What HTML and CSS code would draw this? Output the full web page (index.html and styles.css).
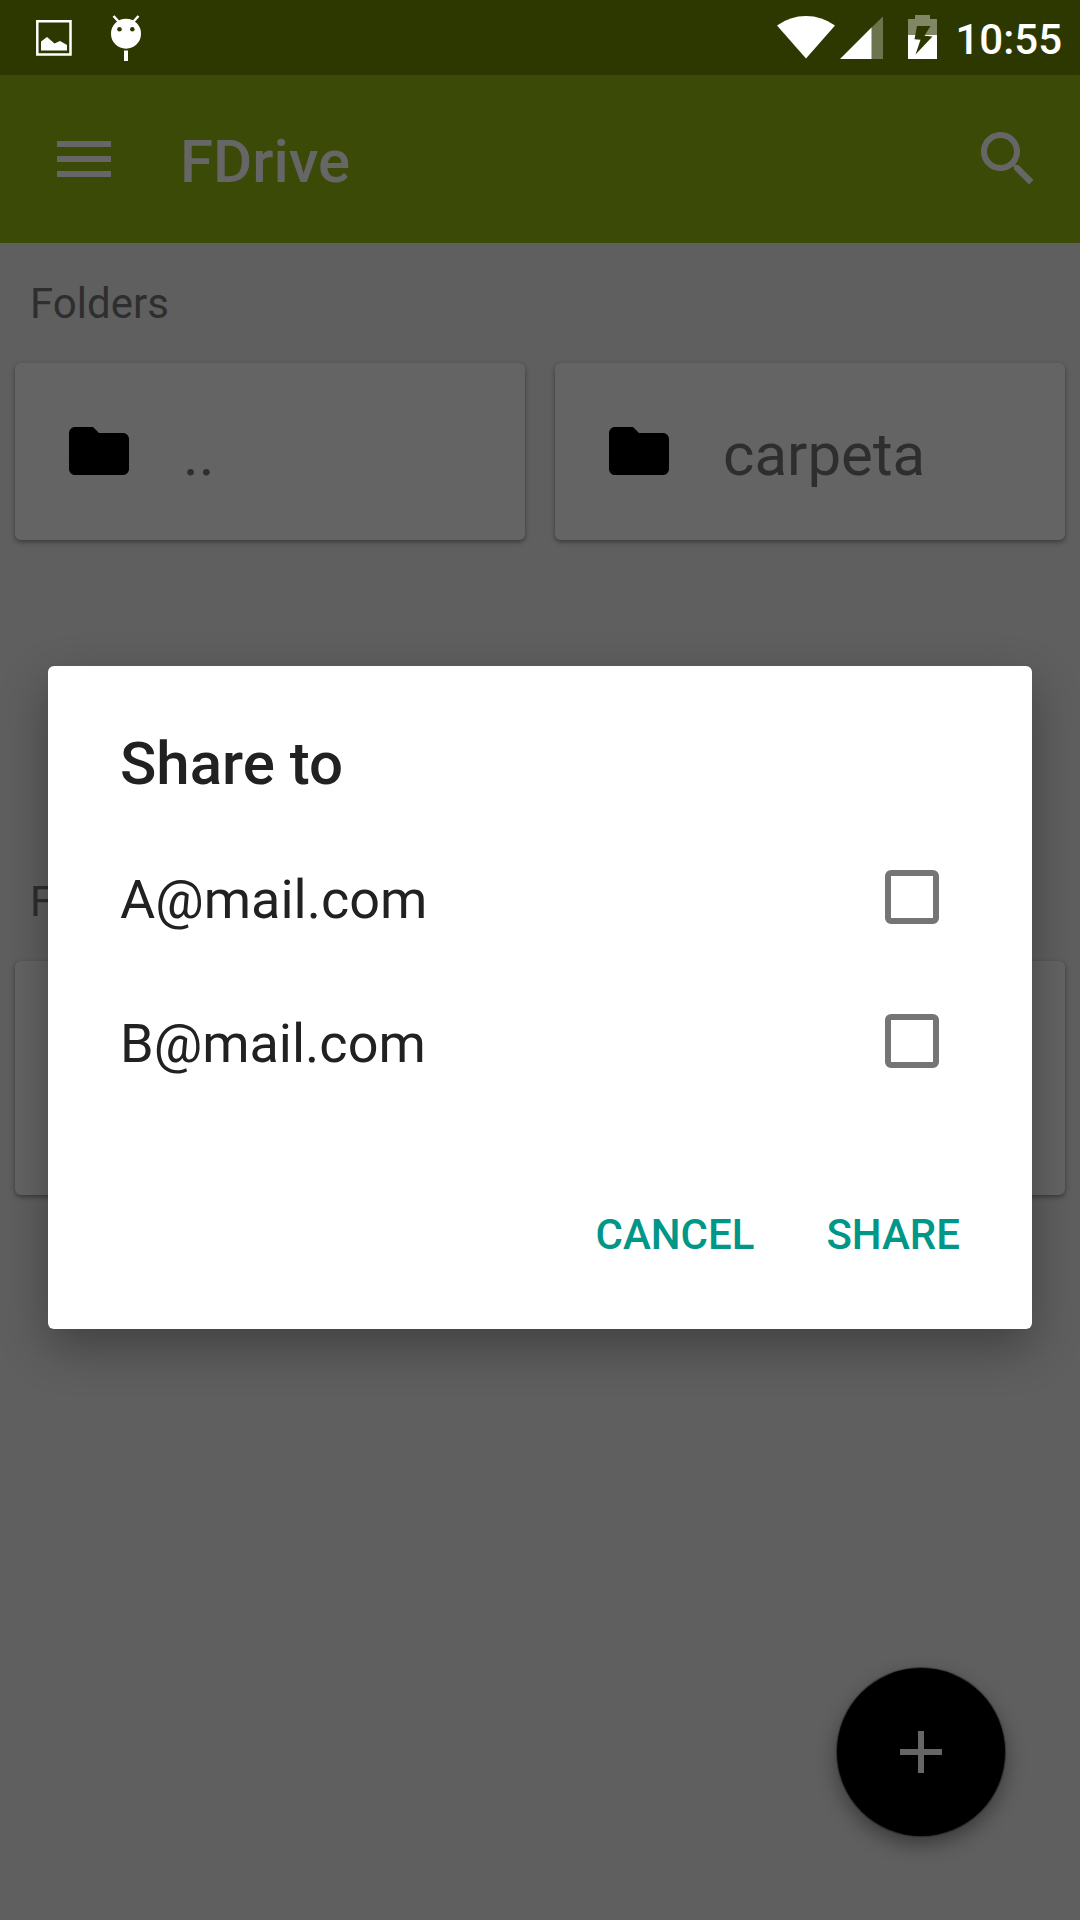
FILE: index.html
```html
<!DOCTYPE html>
<html lang="en">
<head>
<meta charset="utf-8">
<meta name="viewport" content="width=device-width">
<title>FDrive</title>
<link rel="stylesheet" href="styles.css">
</head>
<body>
<div class="status-bar">
  <svg class="status-picture" width="36" height="36" viewBox="0 0 36 36" aria-hidden="true">
    <path class="outline" d="M1.3 1.3H34.5V34.5H1.3Z"/>
    <path d="M5 21.500L11 17L18.500 23.500L24 21L31 25V30.500H5Z"/>
  </svg>
  <svg class="status-android" width="32" height="48" viewBox="0 0 32 48" aria-hidden="true">
    <path class="outline" d="M3.500 1L9 7M28.500 1L23 7"/>
    <circle cx="16" cy="18.700" r="15"/>
    <circle class="eye" cx="9.500" cy="14.300" r="2.300"/>
    <circle class="eye" cx="22.300" cy="14.300" r="2.300"/>
    <path d="M14 35.500H18V46H14Z"/>
  </svg>
  <div class="status-right">
    <svg width="58" height="44" viewBox="0 0 58 44" aria-hidden="true">
      <path d="M0 10.500Q13 1 29 1T58 10.500L29 43.500Z"/>
    </svg>
    <svg class="status-signal" width="44" height="44" viewBox="0 0 44 44" aria-hidden="true">
      <path class="faint" d="M31 13L43 1.500V44H31Z"/>
      <path d="M0 44L31.500 12.500V44Z"/>
    </svg>
    <svg class="status-battery" width="29" height="44" viewBox="0 0 29 44" aria-hidden="true">
      <path class="faint" d="M7 0H22V4H29V20H0V4H7Z"/>
      <path d="M0 20H29V44H0Z"/>
      <path class="bolt" d="M9 11H22.500L16.500 20.700L24.500 21.500L7.500 39.500L12.500 24.700L6.500 24.300Z"/>
    </svg>
    <time class="clock">10:55</time>
  </div>
</div>

<div class="app">
  <header class="toolbar">
    <button class="icon-button" type="button" aria-label="Menu">
      <svg width="72" height="72" viewBox="0 0 24 24"><path d="M3 18h18v-2H3v2zm0-5h18v-2H3v2zm0-7v2h18V6H3z"/></svg>
    </button>
    <h1 class="app-title">FDrive</h1>
    <button class="icon-button" type="button" aria-label="Search">
      <svg width="72" height="72" viewBox="0 0 24 24"><path d="M15.500 14h-.79l-.28-.27C15.410 12.590 16 11.110 16 9.500 16 5.910 13.090 3 9.500 3S3 5.910 3 9.500 5.910 16 9.500 16c1.610 0 3.090-.59 4.230-1.570l.27.28v.79l5 4.990L20.490 19l-4.990-5zm-6 0C7.010 14 5 11.990 5 9.500S7.010 5 9.500 5 14 7.010 14 9.500 11.990 14 9.500 14z"/></svg>
    </button>
  </header>

  <main class="content">
    <section class="folders">
      <h2 class="section-label">Folders</h2>
      <div class="folder-grid">
        <div class="card">
          <svg width="72" height="72" viewBox="0 0 24 24" aria-hidden="true"><path d="M10 4H4c-1.100 0-1.990.9-1.990 2L2 18c0 1.100.9 2 2 2h16c1.100 0 2-.9 2-2V8c0-1.100-.9-2-2-2h-8l-2-2z"/></svg>
          <span class="card-name">..</span>
        </div>
        <div class="card">
          <svg width="72" height="72" viewBox="0 0 24 24" aria-hidden="true"><path d="M10 4H4c-1.100 0-1.990.9-1.990 2L2 18c0 1.100.9 2 2 2h16c1.100 0 2-.9 2-2V8c0-1.100-.9-2-2-2h-8l-2-2z"/></svg>
          <span class="card-name">carpeta</span>
        </div>
      </div>
    </section>
    <section>
      <h2 class="section-label">Files</h2>
      <div class="file-list">
        <div class="card file-card"></div>
      </div>
    </section>
  </main>

  <button class="fab" type="button" aria-label="Add">
    <svg width="72" height="72" viewBox="0 0 24 24"><path d="M19 13h-6v6h-2v-6H5v-2h6V5h2v6h6v2z"/></svg>
  </button>

  <div class="overlay">
    <form class="dialog" role="dialog" aria-labelledby="dialog-title">
      <h2 class="dialog-title" id="dialog-title">Share to</h2>
      <label class="option"><span>A@mail.com</span><input class="checkbox" type="checkbox"></label>
      <label class="option"><span>B@mail.com</span><input class="checkbox" type="checkbox"></label>
      <div class="actions">
        <button class="action" type="button">CANCEL</button>
        <button class="action" type="button">SHARE</button>
      </div>
    </form>
  </div>
</div>
</body>
</html>
```
FILE: styles.css
```css
* {
  box-sizing: border-box;
}

body {
  margin: 0;
  min-height: 100vh;
  display: flex;
  flex-direction: column;
  background: #5f5f5f;
  color: #2e2e2e;
  font-family: Roboto, "Liberation Sans", sans-serif;
}

h1,
h2 {
  margin: 0;
}

button {
  border: 0;
  padding: 0;
  background: none;
  font-family: inherit;
}

svg {
  display: block;
  flex: none;
}

/* Status bar */

.status-bar {
  display: flex;
  align-items: flex-start;
  height: 75px;
  padding: 15px 18px 0 36px;
  background: #2d3800;
  color: #fff;
  fill: #fff;
}

.status-bar .outline {
  fill: none;
  stroke: #fff;
  stroke-width: 2.500;
}

.status-bar .faint {
  fill: #fff;
  opacity: 0.4;
}

.status-signal .faint {
  opacity: 0.3;
}

.status-bar .eye,
.status-bar .bolt {
  fill: #2d3800;
}

.status-picture {
  margin-top: 5px;
}

.status-android {
  margin-left: 38px;
}

.status-right {
  display: flex;
  margin-left: auto;
}

.status-signal {
  margin-left: 5px;
}

.status-battery {
  margin-left: 24px;
}

.clock {
  margin-left: 18px;
  font-size: 42px;
  font-weight: 500;
  line-height: 50px;
}

/* App */

.app {
  position: relative;
  flex: 1;
  display: flex;
  flex-direction: column;
}

.toolbar {
  display: flex;
  align-items: center;
  height: 168px;
  padding: 0 36px 0 48px;
  background: #3c4a08;
  color: #666;
}

.icon-button {
  fill: #666;
}

.app-title {
  flex: 1;
  padding: 5px 0 0 60px;
  font-size: 60px;
  font-weight: 500;
  line-height: 72px;
}

.folders {
  min-height: 598px;
}

.section-label {
  height: 120px;
  padding: 36px 30px 0;
  font-size: 42px;
  font-weight: 400;
  line-height: 50px;
}

.folder-grid {
  display: grid;
  grid-template-columns: 1fr 1fr;
  gap: 30px;
  padding: 0 15px;
}

.file-list {
  padding: 0 15px;
}

.card {
  display: flex;
  align-items: flex-start;
  height: 177px;
  padding: 52px 48px 0;
  border-radius: 6px;
  background: #646464;
  box-shadow: 0 2px 5px rgba(0, 0, 0, 0.4);
  fill: #000;
}

.file-card {
  height: 234px;
}

.card-name {
  padding: 4px 0 0 48px;
  font-size: 60px;
  line-height: 72px;
}

.fab {
  position: absolute;
  right: 75px;
  bottom: 84px;
  display: grid;
  place-items: center;
  width: 168px;
  height: 168px;
  border-radius: 50%;
  background: #000;
  fill: #666;
  box-shadow: 0 0 1px 1px rgba(0, 0, 0, 0.4), 0 8px 20px rgba(0, 0, 0, 0.4);
}

/* Share dialog */

.overlay {
  position: absolute;
  inset: 0;
  display: flex;
  align-items: center;
  padding: 0 48px;
}

.dialog {
  flex: 1;
  padding: 60px 0 54px;
  border-radius: 6px;
  background: #fff;
  color: #212121;
  box-shadow: 0 18px 48px rgba(0, 0, 0, 0.32);
}

.dialog-title {
  padding: 2px 72px 25px;
  font-size: 60px;
  font-weight: 500;
  line-height: 72px;
}

.option {
  display: flex;
  align-items: center;
  justify-content: space-between;
  height: 144px;
  padding: 0 93px 0 72px;
  font-size: 54px;
  line-height: 64px;
}

.option span {
  padding-top: 6px;
}

.checkbox {
  appearance: none;
  width: 54px;
  height: 54px;
  margin: 0;
  border: 6px solid #757575;
  border-radius: 6px;
}

.checkbox:checked {
  background: #009688;
  border-color: #009688;
}

.actions {
  display: flex;
  justify-content: flex-end;
  gap: 72px;
  padding: 82px 72px 0;
}

.action {
  height: 80px;
  color: #009688;
  font-size: 42px;
  font-weight: 500;
  line-height: 48px;
}
```
